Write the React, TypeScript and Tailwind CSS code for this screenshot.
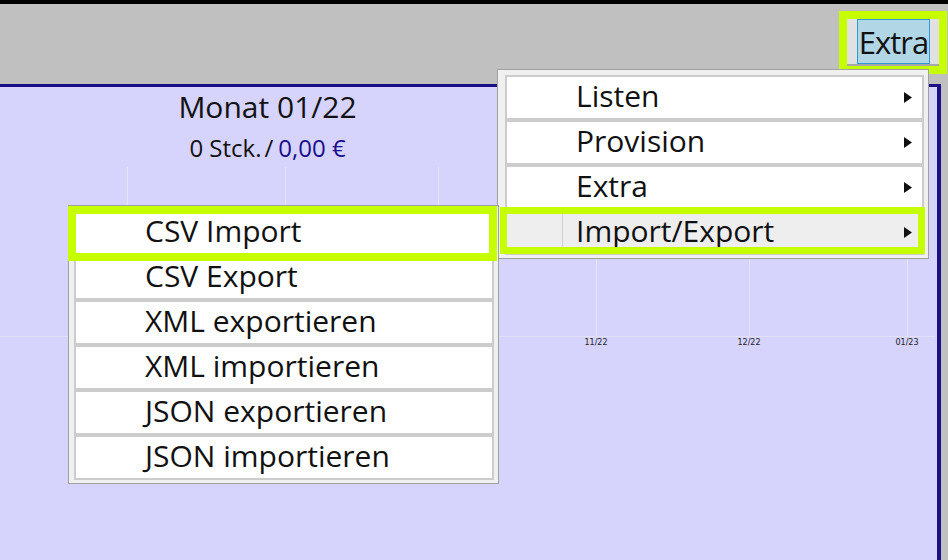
import React from "react";

const menuItems = ["Listen", "Provision", "Extra", "Import/Export"];
const subItems = [
  "CSV Import",
  "CSV Export",
  "XML exportieren",
  "XML importieren",
  "JSON exportieren",
  "JSON importieren",
];

const gridX = [127, 285, 438, 596, 749, 907];
const labels = [
  { x: 596, t: "11/22" },
  { x: 749, t: "12/22" },
  { x: 907, t: "01/23" },
];

const Arrow = () => (
  <svg width="8" height="11" viewBox="0 0 8 11" className="mr-[10px] self-center">
    <path d="M0 0 L8 5.5 L0 11 Z" fill="#111" />
  </svg>
);

const App = () => {
  return (
    <div className="relative w-[948px] h-[560px] overflow-hidden flex flex-col border-t-4 border-black bg-[#c0c0c0] font-['Open_Sans','Noto_Sans',sans-serif] text-[#111]">
      {/* toolbar */}
      <div className="h-[80px] shrink-0 flex justify-end items-start">
        <div className="mt-[7px] mr-[1px] border-8 border-[#c6ff00]">
          <div className="w-[92px] h-[47px] bg-[#e1e1e1] border-b-2 border-[#a8a8a8] px-[10px]">
            <button className="w-[73px] h-[45px] bg-[#b1d7e7] border border-[#2f9bd6] flex items-center justify-center pt-[2px] text-[31px] leading-none tracking-[-1px]">
              Extra
            </button>
          </div>
        </div>
      </div>

      {/* chart panel */}
      <div className="flex-1 pr-[7px]">
        <div className="h-full bg-[#d6d3fd] border-t-[3px] border-r-4 border-[#1a0f86]">
          <div className="w-[535px] text-center pt-[5px]">
            <div className="text-[30px] leading-[30px]">Monat 01/22</div>
            <div className="mt-[14px] text-[24px] leading-[24px]">
              0 Stck.<span className="ml-[3px] mr-[5px]">/</span>
              <span className="text-[#1a0f8a]">0,00 €</span>
            </div>
          </div>
          <svg width="937" height="200" className="block">
            {gridX.map((x) => (
              <line key={x} x1={x + 0.5} y1={7} x2={x + 0.5} y2={176} stroke="#e6e4f3" strokeWidth="1" />
            ))}
            <line x1="0" y1="176.5" x2="935" y2="176.5" stroke="#e2e0f4" strokeWidth="1" />
            {labels.map((l) => (
              <text
                key={l.t}
                x={l.x}
                y={185}
                textAnchor="middle"
                fontSize="8"
                fontFamily="'DejaVu Sans', sans-serif"
                fill="#222"
              >
                {l.t}
              </text>
            ))}
          </svg>
        </div>
      </div>

      {/* Extra menu */}
      <div className="absolute left-[497px] top-[65px] w-[432px] border border-[#a0a0a0] bg-[#f0f0f0] pl-[7px] pr-[4px] pt-[5px] pb-[3px]">
        {menuItems.map((item, i) => {
          const active = i === menuItems.length - 1;
          return (
            <div
              key={item}
              className={`h-[45px] border-2 border-[#cccccc] flex ${active ? "bg-[#eeeeee]" : "bg-white"}`}
            >
              <div className={`w-[56px] border-r ${active ? "border-[#d2d2d2]" : "border-transparent"}`} />
              <div className="flex-1 pl-[13px] pt-[1px] text-[30px] leading-[36px] whitespace-nowrap">{item}</div>
              <Arrow />
            </div>
          );
        })}
      </div>

      {/* Import/Export submenu */}
      <div className="absolute left-[68px] top-[201px] w-[431px] border border-[#a0a0a0] bg-[#f0f0f0] pl-[5px] pr-[4px] pt-[4px] pb-[3px]">
        {subItems.map((item) => (
          <div key={item} className="h-[45px] border-2 border-[#cccccc] bg-white flex">
            <div className="pl-[69px] pt-[1px] text-[30px] leading-[36px] whitespace-nowrap">{item}</div>
          </div>
        ))}
      </div>

      {/* highlight frames */}
      <div className="absolute left-[500px] top-[203px] w-[425px] h-[47px] border-[7px] border-[#c6ff00]" />
      <div className="absolute left-[68px] top-[202px] w-[429px] h-[55px] border-8 border-[#c6ff00]" />
    </div>
  );
};

export default App;
